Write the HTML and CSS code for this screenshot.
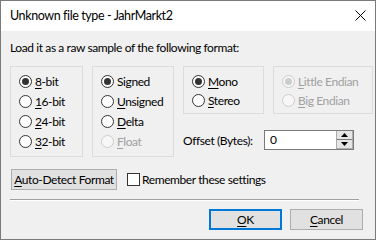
FILE: index.html
```html
<!DOCTYPE html>
<html>
<head>
<meta charset="utf-8">
<link rel="stylesheet" href="styles.css">
</head>
<body>
<div class="window">
  <div class="titlebar">
    <span class="title">Unknown file type - JahrMarkt2</span>
    <svg class="close" width="11" height="11" viewBox="0 0 11 11"><path d="M0.5 0.5 L10.5 10.5 M10.5 0.5 L0.5 10.5" stroke="#000" stroke-width="1" fill="none"/></svg>
  </div>
  <div class="content">
    <p class="prompt">Load it as a raw sample of the following format:</p>
    <div class="options">
      <div class="group g1">
        <div class="radio checked"><span class="dot"></span><span><u>8</u>-bit</span></div>
        <div class="radio"><span class="dot"></span><span><u>1</u>6-bit</span></div>
        <div class="radio"><span class="dot"></span><span><u>2</u>4-bit</span></div>
        <div class="radio"><span class="dot"></span><span><u>3</u>2-bit</span></div>
      </div>
      <div class="group g2">
        <div class="radio checked"><span class="dot"></span><span>Signed</span></div>
        <div class="radio"><span class="dot"></span><span><u>U</u>nsigned</span></div>
        <div class="radio"><span class="dot"></span><span><u>D</u>elta</span></div>
        <div class="radio disabled"><span class="dot"></span><span><u>F</u>loat</span></div>
      </div>
      <div class="right">
        <div class="right-top">
          <div class="group g3">
            <div class="radio checked"><span class="dot"></span><span><u>M</u>ono</span></div>
            <div class="radio"><span class="dot"></span><span><u>S</u>tereo</span></div>
          </div>
          <div class="group g4">
            <div class="radio checked disabled"><span class="dot"></span><span><u>L</u>ittle Endian</span></div>
            <div class="radio disabled"><span class="dot"></span><span><u>B</u>ig Endian</span></div>
          </div>
        </div>
        <div class="offset">
          <span class="offset-label">Offset (Bytes):</span>
          <div class="spin">
            <span class="spin-value">0</span>
            <div class="spin-btns">
              <span class="spin-btn"><svg width="7" height="4" viewBox="0 0 7 4"><path d="M3.5 0 L7 4 L0 4 Z" fill="#000"/></svg></span>
              <span class="spin-btn"><svg width="7" height="4" viewBox="0 0 7 4"><path d="M0 0 L7 0 L3.5 4 Z" fill="#000"/></svg></span>
            </div>
          </div>
        </div>
      </div>
    </div>
    <div class="action-row">
      <button class="btn detect"><u>A</u>uto-Detect Format</button>
      <label class="check"><span class="box"></span><span>Remember these settings</span></label>
    </div>
    <div class="sep"></div>
    <div class="buttons">
      <button class="btn default"><u>O</u>K</button>
      <button class="btn"><u>C</u>ancel</button>
    </div>
  </div>
</div>
</body>
</html>
```
FILE: styles.css
```css
html, body {
  margin: 0;
  padding: 0;
  background: #f0f0f0;
}
.window {
  width: 376px;
  height: 240px;
  box-sizing: border-box;
  border: 1px solid #7a7a7a;
  background: #f0f0f0;
  display: flex;
  flex-direction: column;
  font-family: Lato, "Liberation Sans", sans-serif;
  font-size: 12px;
  letter-spacing: -0.4px;
  line-height: 15px;
  color: #000;
  overflow: hidden;
}
.titlebar {
  height: 30px;
  background: #fff;
  display: flex;
  align-items: center;
  justify-content: space-between;
  padding: 0 9px 0 9px;
  flex: none;
}
.title {
  font-size: 12.5px;
  letter-spacing: -0.4px;
  margin-top: -1px;
}
.close {
  display: block;
  margin-top: -1px;
}
.content {
  flex: 1;
  display: flex;
  flex-direction: column;
}
.prompt {
  margin: 9px 0 0 9px;
}
.options {
  display: flex;
  margin: 11px 0 0 9px;
  gap: 9px;
  align-items: flex-start;
}
.group {
  box-sizing: border-box;
  border: 1px solid #dcdcdc;
  padding: 4px 0 0 8px;
}
.g1 { width: 73px; height: 91px; }
.g2 { width: 82px; height: 91px; }
.g3 { width: 81px; height: 48px; padding-top: 5px; }
.g4 { width: 100px; height: 48px; padding-top: 5px; }
.g3 .radio, .g4 .radio { height: 19px; }
.radio {
  display: flex;
  align-items: center;
  height: 20px;
  gap: 3px;
  white-space: nowrap;
}
.radio .dot {
  width: 13px;
  height: 13px;
  box-sizing: border-box;
  border: 1px solid #333;
  border-radius: 50%;
  background: #fff;
  position: relative;
  flex: none;
}
.radio.checked .dot::after {
  content: "";
  position: absolute;
  left: 2px;
  top: 2px;
  width: 7px;
  height: 7px;
  border-radius: 50%;
  background: #333;
}
.radio.disabled {
  color: #a0a0a0;
}
.radio.disabled .dot {
  border-color: #cccccc;
  background: #f7f7f7;
}
.radio.disabled.checked .dot::after {
  background: #cccccc;
}
u {
  text-decoration: underline;
  text-underline-offset: 2px;
}
.right {
  display: flex;
  flex-direction: column;
}
.right-top {
  display: flex;
  gap: 9px;
}
.offset {
  display: flex;
  align-items: center;
  margin-top: 16px;
}
.offset-label {
  width: 81px;
  white-space: nowrap;
}
.spin {
  display: flex;
  width: 90px;
  height: 20px;
  box-sizing: border-box;
  border: 1px solid #7a7a7a;
  background: #fff;
}
.spin-value {
  flex: 1;
  padding-left: 5px;
  line-height: 18px;
}
.spin-btns {
  width: 17px;
  display: flex;
  flex-direction: column;
  border-left: 1px solid #fff;
}
.spin-btn {
  flex: 1;
  display: flex;
  align-items: center;
  justify-content: center;
  background: #e5e5e5;
  border: 1px solid #adadad;
  border-top-width: 0;
}
.spin-btn:first-child {
  border-bottom: 1px solid #7a7a7a;
}
.action-row {
  display: flex;
  align-items: center;
  margin: 12px 0 0 10px;
  gap: 10px;
}
.btn {
  font: inherit;
  letter-spacing: inherit;
  color: #000;
  background: #e1e1e1;
  border: 1px solid #adadad;
  padding: 0;
  margin: 0;
  height: 21px;
  box-sizing: border-box;
  white-space: nowrap;
}
.detect {
  width: 106px;
}
.check {
  display: flex;
  align-items: center;
  gap: 2px;
  white-space: nowrap;
}
.box {
  width: 13px;
  height: 13px;
  box-sizing: border-box;
  border: 1px solid #333;
  background: #fff;
}
.sep {
  margin: 9px 0 0 9px;
  width: 349px;
  height: 1px;
  background: #a0a0a0;
  border-bottom: 1px solid #fff;
}
.buttons {
  display: flex;
  justify-content: flex-end;
  gap: 8px;
  margin: 8px 12px 0 0;
}
.buttons .btn {
  width: 73px;
  height: 21px;
}
.btn.default {
  border: 2px solid #0078d7;
}
```
